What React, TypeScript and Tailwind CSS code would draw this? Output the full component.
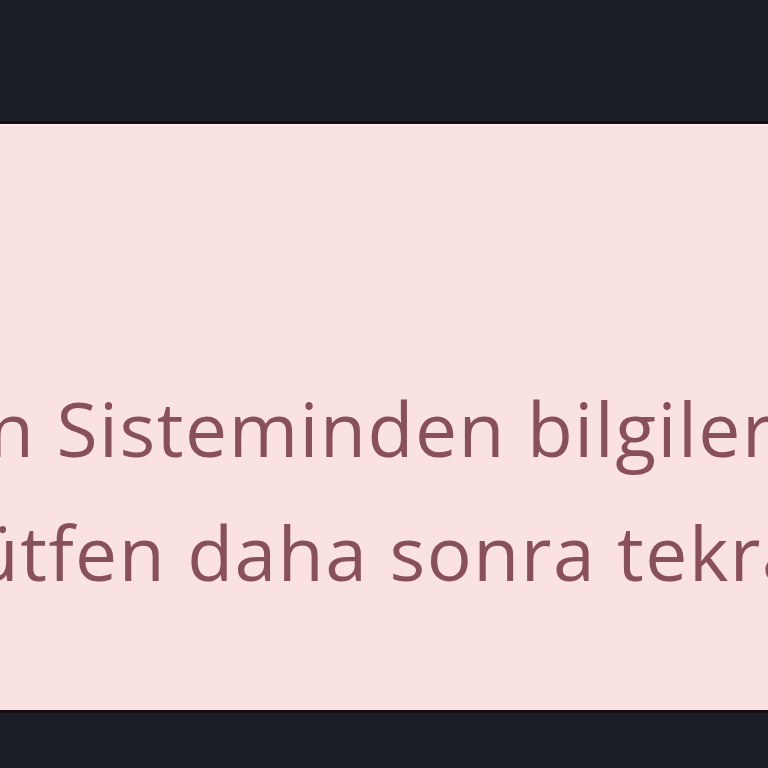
import React from 'react';

export default function App() {
  return (
    <div className="w-[768px] h-[768px] overflow-hidden bg-[#1b1e26] flex flex-col" style={{ fontFamily: '"Open Sans", "Noto Sans", sans-serif' }}>
      {/* Üst koyu alan */}
      <div className="h-[121px] shrink-0 bg-[#1b1e26]" />

      {/* Hata kutusu */}
      <div className="h-[592px] shrink-0 border-t-[3px] border-b-[3px] border-[#160c12] bg-[#fae2e2] overflow-hidden">
        <div className="h-[2px] bg-[#fdeaec]" />
        <div className="pt-[240px] text-[75px] leading-[124px] tracking-[1.5px] text-[#88505a] whitespace-nowrap">
          <div className="ml-[-12px]">n Sisteminden bilgileri alınamadı.</div>
          <div className="ml-[-68px]">Lütfen daha sonra tekrar deneyiniz.</div>
        </div>
      </div>

      {/* Alt koyu alan */}
      <div className="flex-1 bg-[#1b1e26]" />
    </div>
  );
}
